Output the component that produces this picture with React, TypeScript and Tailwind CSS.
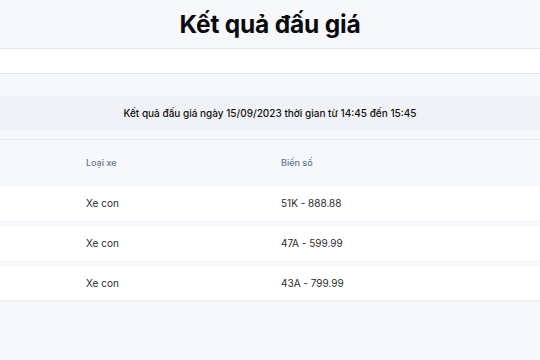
import React from "react";

const rows = [
  { type: "Xe con", plate: "51K - 888.88" },
  { type: "Xe con", plate: "47A - 599.99" },
  { type: "Xe con", plate: "43A - 799.99" },
];

export default function App() {
  return (
    <div
      className="w-[540px] h-[360px] overflow-hidden bg-[#f7f8fc] text-[#111]"
      style={{ fontFamily: "Inter, 'Noto Sans', sans-serif" }}
    >
      <div className="h-[48px] flex items-center justify-center">
        <h1 className="text-[24.5px] font-bold leading-none tracking-[-0.2px] text-[#0b0b0f]">Kết quả đấu giá</h1>
      </div>
      <div className="h-[26px] bg-white border-y border-[#e3e5f0]" />
      <div className="h-[22px]" />
      <div className="h-[34px] bg-[#f0f2f7] flex items-center justify-center">
        <span className="text-[10px] font-medium text-[#111]">
          Kết quả đấu giá ngày 15/09/2023 thời gian từ 14:45 đến 15:45
        </span>
      </div>
      <div className="h-[10px] border-b border-[#eceef3]" />
      <div className="h-[46px] flex items-center">
        <div className="w-[281px] pl-[86px] text-[9px] font-medium text-[#64748b]">Loại xe</div>
        <div className="text-[9px] font-medium text-[#64748b]">Biến số</div>
      </div>
      <div className="flex flex-col gap-[6px]">
        {rows.map((r) => (
          <div key={r.plate} className="h-[34px] bg-white flex items-center">
            <div className="w-[281px] pl-[86px] text-[10px] text-[#2a2a2a]">{r.type}</div>
            <div className="text-[10px] text-[#2a2a2a]">{r.plate}</div>
          </div>
        ))}
      </div>
      <div className="h-[2px] bg-[#eff1f6]" />
    </div>
  );
}
